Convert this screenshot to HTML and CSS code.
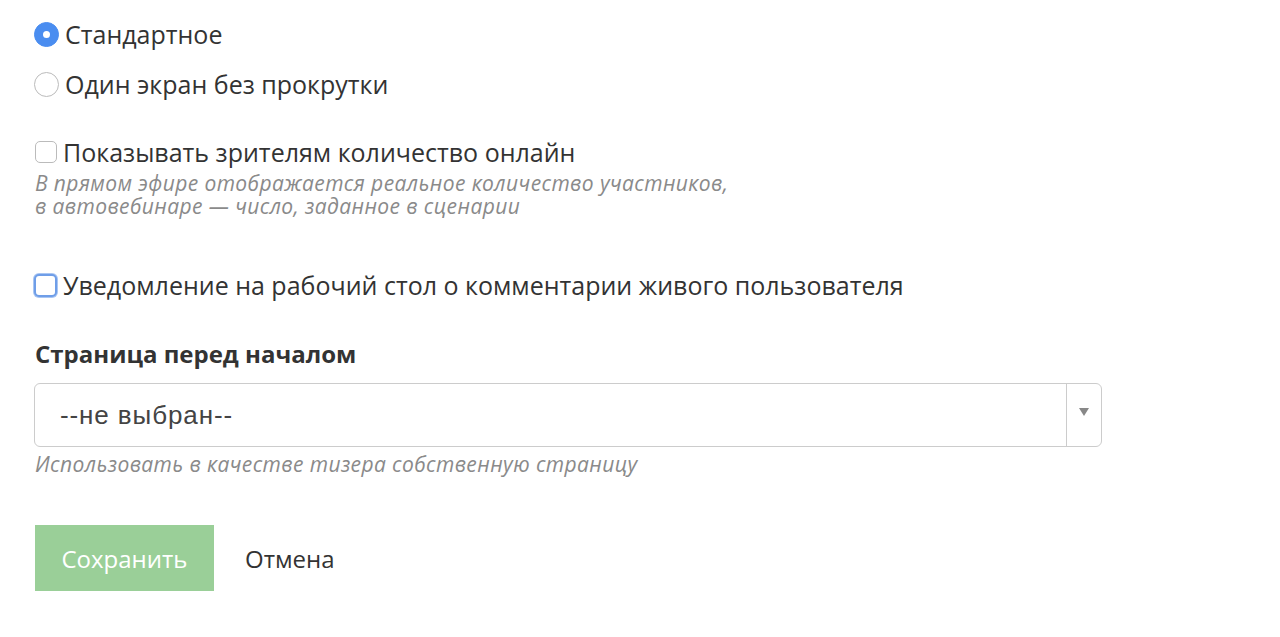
FILE: index.html
```html
<!DOCTYPE html>
<html lang="ru">
<head>
<meta charset="utf-8">
<link rel="stylesheet" href="styles.css">
</head>
<body>
<form class="form">
  <div class="radios">
    <label class="opt"><span class="radio checked"></span><span class="txt">Стандартное</span></label>
    <label class="opt"><span class="radio"></span><span class="txt">Один экран без прокрутки</span></label>
  </div>

  <div class="group g-online">
    <label class="opt"><span class="check"></span><span class="txt">Показывать зрителям количество онлайн</span></label>
    <p class="hint">В прямом эфире отображается реальное количество участников,<br>в автовебинаре — число, заданное в сценарии</p>
  </div>

  <div class="group g-notify">
    <label class="opt"><span class="check focus"></span><span class="txt">Уведомление на рабочий стол о комментарии живого пользователя</span></label>
  </div>

  <div class="group g-page">
    <div class="title">Страница перед началом</div>
    <div class="select">
      <span class="sel-val">--не выбран--</span>
      <span class="sel-arrow"><svg width="10" height="8" viewBox="0 0 10 8"><path d="M0 0H10L5 8Z" fill="#888"/></svg></span>
    </div>
    <p class="hint">Использовать в качестве тизера собственную страницу</p>
  </div>

  <div class="actions">
    <button type="button" class="btn-save">Сохранить</button>
    <button type="button" class="btn-cancel">Отмена</button>
  </div>
</form>
</body>
</html>
```

FILE: styles.css
```css
* { box-sizing: border-box; }
html, body { margin: 0; padding: 0; background: #fff; }
body {
  font-family: "Open Sans", "Liberation Sans", sans-serif;
  color: #333;
  width: 1280px;
  height: 637px;
  overflow: hidden;
}
.form {
  padding: 20px 0 0 34px;
  display: flex;
  flex-direction: column;
}
.radios { display: flex; flex-direction: column; gap: 22px; }
.opt {
  display: flex;
  align-items: center;
  gap: 6px;
  height: 28px;
  font-size: 25px;
  white-space: nowrap;
}
.radio {
  width: 25px; height: 25px;
  border-radius: 50%;
  border: 1px solid #bbb;
  background: #fff;
  flex: none;
  position: relative;
}
.radio.checked {
  background: #4a8df0;
  border-color: #4a8df0;
}
.radio.checked::after {
  content: "";
  position: absolute;
  left: 50%; top: 50%;
  width: 7px; height: 7px;
  margin: -3.5px 0 0 -3.5px;
  border-radius: 50%;
  background: #fff;
}
.check {
  width: 22px; height: 22px;
  margin-left: 1px;
  border: 1px solid #bbb;
  border-radius: 5px;
  background: #fff;
  flex: none;
}
.check.focus {
  border: 2px solid #6f9ee8;
  box-shadow: 0 0 0 1px #a9c6f3;
  margin-left: 0;
  width: 23px; height: 23px;
}
.group { display: flex; flex-direction: column; }
.g-online { margin-top: 40px; }
.g-notify { margin-top: 53px; }
.g-page { margin-top: 41px; }
.hint {
  margin: 6px 0 0 1px;
  font-style: italic;
  font-size: 21px;
  line-height: 23px;
  letter-spacing: 0.4px;
  color: #8a8a8a;
  white-space: nowrap;
}
.title {
  font-weight: 700;
  font-size: 24px;
  line-height: 28px;
  margin-left: 1px;
}
.select {
  margin-top: 15px;
  width: 1068px;
  height: 64px;
  border: 1px solid #ccc;
  border-radius: 6px;
  display: flex;
  align-items: center;
  background: #fff;
}
.sel-val {
  flex: 1;
  padding-left: 25px;
  font-family: "Liberation Sans", Arial, sans-serif;
  font-size: 26px;
  letter-spacing: 0.9px;
  color: #444;
}
.sel-arrow {
  width: 35px;
  height: 100%;
  border-left: 1px solid #ccc;
  display: flex;
  align-items: center;
  justify-content: center;
  padding-bottom: 6px;
}
.g-page .hint { margin-top: 6px; }
.actions {
  margin-top: 49px;
  display: flex;
  align-items: center;
  gap: 31px;
}
.btn-save {
  width: 179px;
  height: 66px;
  margin-left: 1px;
  border: none;
  background: #9acf98;
  color: #fff;
  font-family: inherit;
  font-size: 24px;
  padding: 0;
}
.btn-cancel {
  border: none;
  background: none;
  padding: 0;
  font-family: inherit;
  font-size: 24px;
  color: #333;
}
```
